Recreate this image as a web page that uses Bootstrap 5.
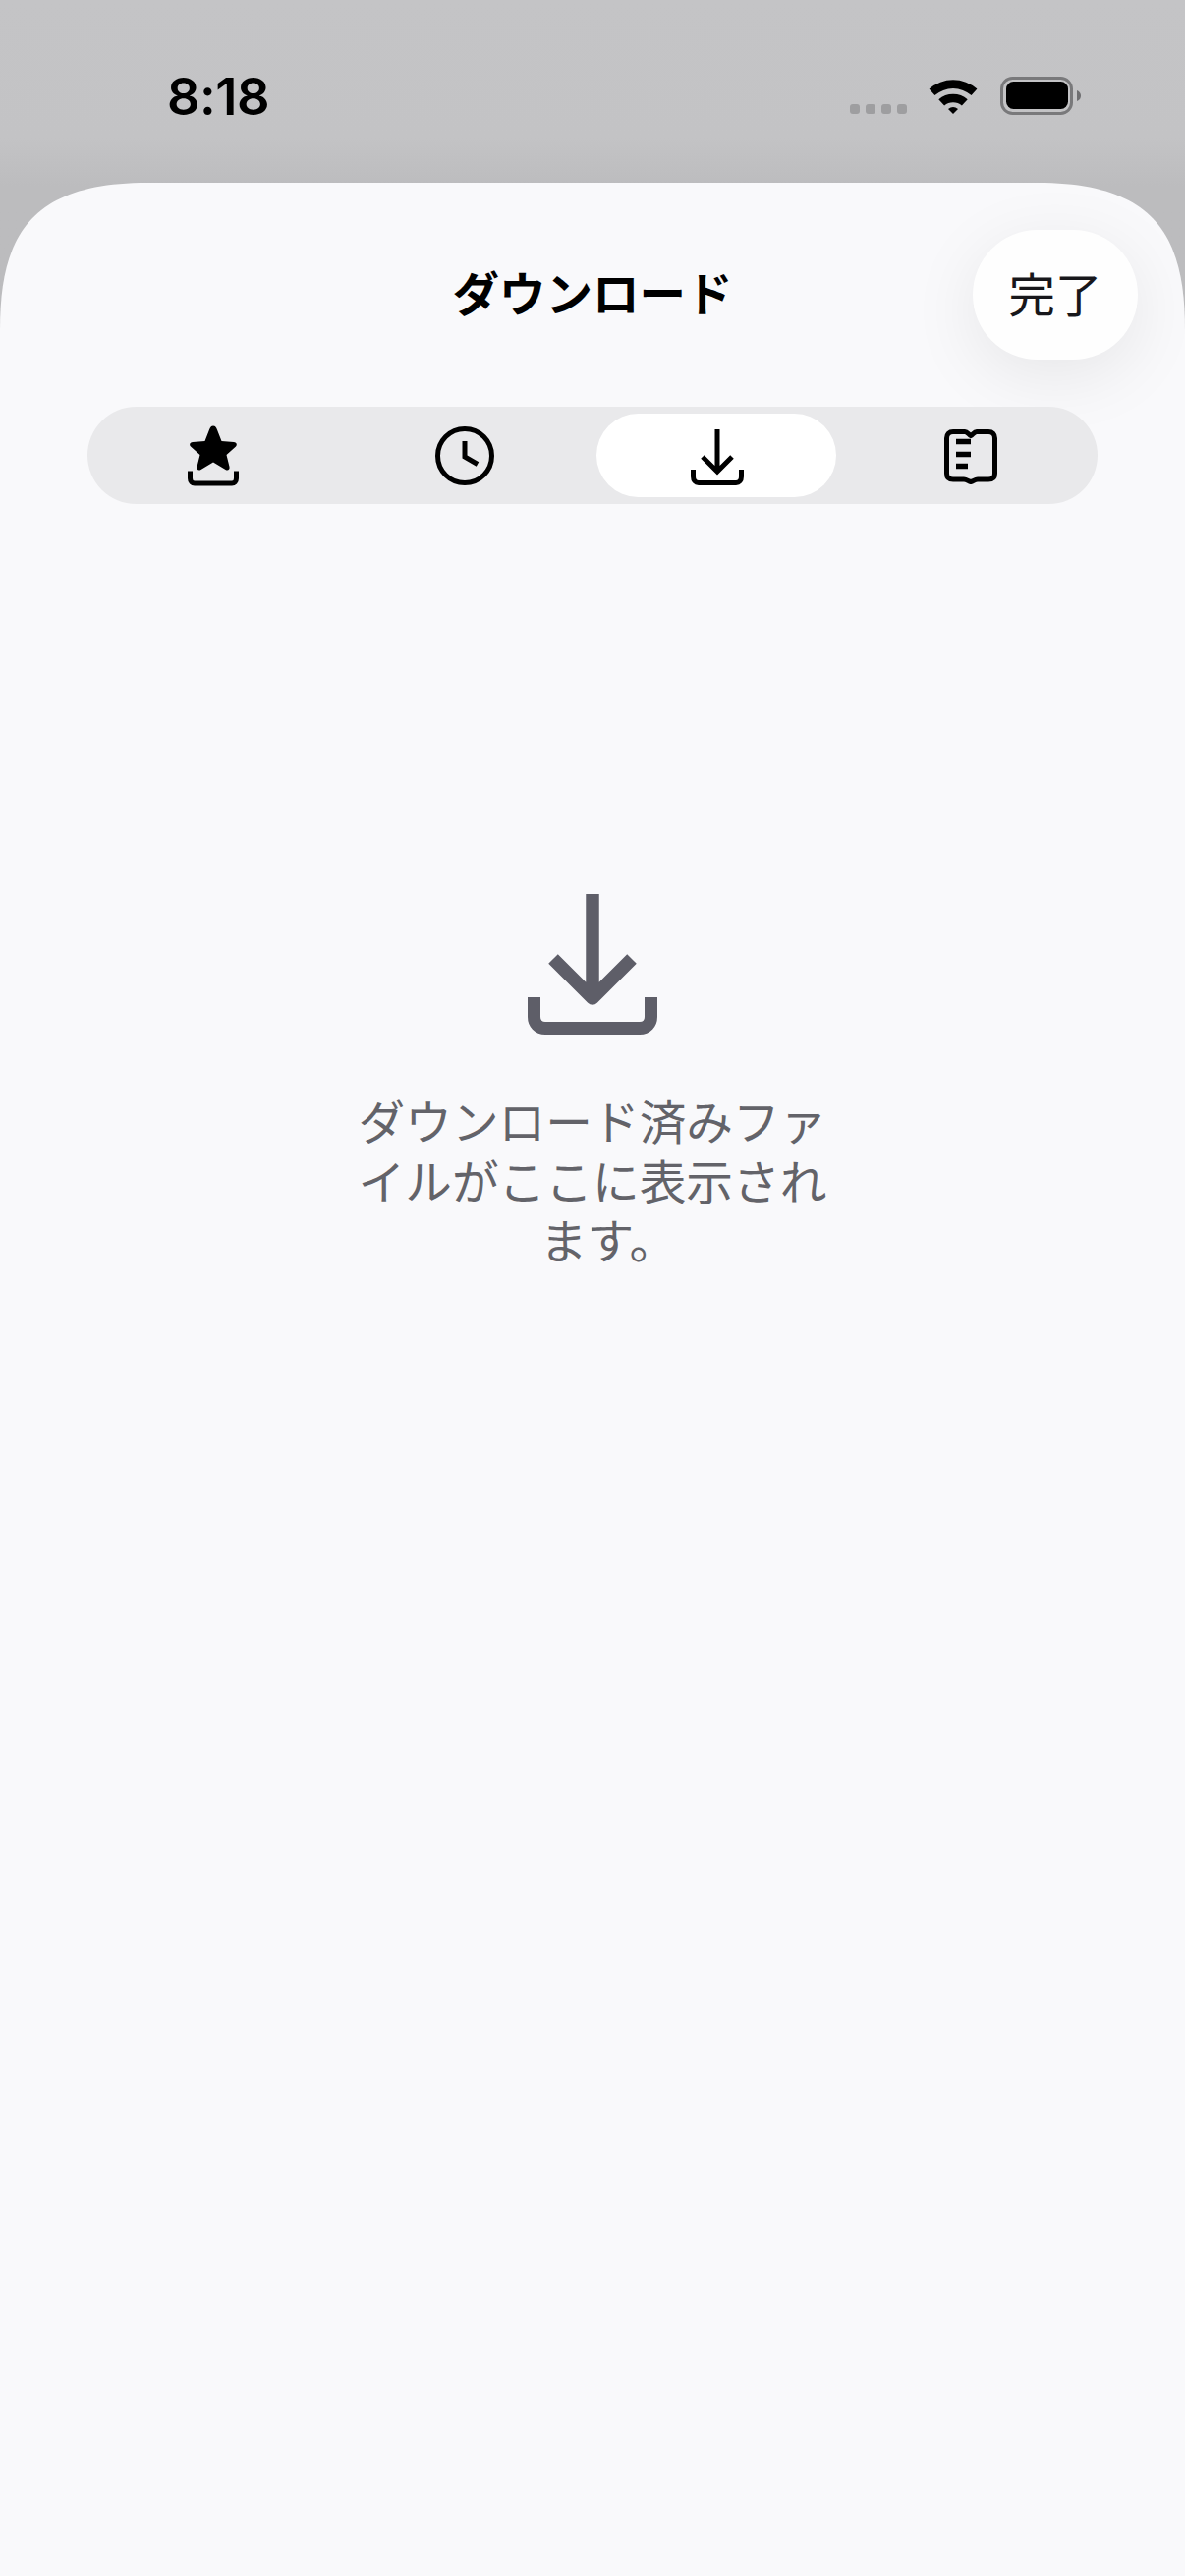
<!DOCTYPE html>
<html lang="ja">
<head>
<meta charset="utf-8">
<title>ダウンロード</title>
<link href="https://cdn.jsdelivr.net/npm/bootstrap@5.3.0/dist/css/bootstrap.min.css" rel="stylesheet">
<style>
html,body{height:100%}
body{background:linear-gradient(#c4c4c6,#c3c3c5 140px,#bcbcbe 190px,#bbbbbd);font-family:"Noto Sans CJK JP","Noto Sans",sans-serif;color:#000;width:1206px;height:2622px;overflow:hidden}
.phone-frame{height:2622px}
.status-strip{height:186px;padding:79px 106px 0 170px;align-items:flex-start}
.clock-text{font-family:Inter,"Noto Sans",sans-serif;font-weight:600;font-size:52.5px;line-height:38px;letter-spacing:-.5px}
.signal-dots{gap:6px;margin-top:27px;margin-right:22px}
.signal-dots i{display:block;width:10px;height:10px;border-radius:3px;background:#9e9ea0}
.wifi-ico{margin-right:23px}
.sheet-panel{background:#f9f9fb;clip-path:path("M0 150C0 55 30 0 150 0H1056C1176 0 1206 55 1206 150V2436H0Z");flex:1 1 auto;padding-top:48px}
.sheet-head{display:grid;grid-template-columns:1fr auto 1fr;align-items:center;height:132px}
.sheet-title{grid-column:2;font-size:47.5px;font-weight:600;line-height:60px;margin:0;padding-bottom:6px}
.done-btn{grid-column:3;justify-self:end;margin-right:48px;width:168px;height:132px;border-radius:66px;background:#fefefe;border:0;padding:0 0 5px 0;font-size:47.5px;line-height:60px;color:#17171b;box-shadow:0 16px 70px rgba(0,0,0,.08)}
.segment-bar{margin:48px 89px 0;height:99px;background:#e9e9eb;border-radius:50px}
.segment-cell{flex:0 0 256px;height:99px;padding:7px 6px;border:0;background:transparent}
.segment-cell>span{height:85px;border-radius:43px}
.segment-cell.is-on>span{background:#fff}
.book-shift{margin-left:6px;margin-top:3px}
.empty-ico{margin-top:397px}
.empty-copy{margin:57px 0 0;font-size:47.7px;line-height:60.5px;color:#636369;text-align:center}
.hang-mark{margin-right:-32px}
</style>
</head>
<body>
<div class="phone-frame d-flex flex-column">
  <div class="status-strip d-flex justify-content-between">
    <div class="clock-text">8:18</div>
    <div class="d-flex align-items-start">
      <div class="signal-dots d-flex"><i></i><i></i><i></i><i></i></div>
      <svg class="wifi-ico" width="50" height="37" viewBox="0 0 50 37"><path d="M0.6 11.500A37 37 0 0 1 49.400 11.500L43.600 18A28.500 28.500 0 0 0 6.400 18Z" fill="#000"/><path d="M10.300 22.300A22.500 22.500 0 0 1 39.700 22.300L33.900 28.500A14 14 0 0 0 16.100 28.500Z" fill="#000"/><path d="M20 32A8 8 0 0 1 30 32L25 37Z" fill="#000"/></svg>
      <svg width="82" height="39" viewBox="0 0 82 39" style="margin-top:-1px"><rect x="1.500" y="1.500" width="71" height="36" rx="11" fill="none" stroke="#79797b" stroke-width="3"/><rect x="6" y="5" width="63" height="28" rx="7.500" fill="#000"/><path d="M78 14C81 15 82 17.500 82 19.500C82 21.500 81 24 78 25Z" fill="#6f6f71"/></svg>
    </div>
  </div>
  <main class="sheet-panel d-flex flex-column">
    <header class="sheet-head">
      <h1 class="sheet-title">ダウンロード</h1>
      <button class="done-btn" type="button">完了</button>
    </header>
    <div class="segment-bar d-flex">
      <button class="segment-cell" type="button" aria-label="お気に入り"><span class="d-flex align-items-center justify-content-center">
        <svg width="56" height="64" viewBox="0 0 56 64"><path transform="translate(0 1)" d="M28 0.500C30 0.500 31 2 32 4.500L36.500 16L49 17C51.500 17.200 52.800 19.500 51 21.500L41.500 30L44.500 42C45.200 45 42.800 46.500 40.500 45L28 37.500L15.500 45C13.200 46.500 10.800 45 11.500 42L14.500 30L5 21.500C3.200 19.500 4.500 17.200 7 17L19.500 16L24 4.500C25 2 26 0.500 28 0.500Z" fill="#000"/><path d="M4.500 47.500V55C4.500 58.500 6.500 60 9 60H47C49.500 60 51.500 58.500 51.500 55V47.500" fill="none" stroke="#000" stroke-width="5"/></svg>
      </span></button>
      <button class="segment-cell" type="button" aria-label="履歴"><span class="d-flex align-items-center justify-content-center">
        <svg width="60" height="60" viewBox="0 0 60 60"><circle cx="30" cy="30" r="27.500" fill="none" stroke="#000" stroke-width="5"/><path d="M30 15V31L43 38.500" fill="none" stroke="#000" stroke-width="5"/></svg>
      </span></button>
      <button class="segment-cell is-on" type="button" aria-label="ダウンロード"><span class="d-flex align-items-center justify-content-center">
        <svg width="56" height="61" viewBox="0 0 56 61"><path d="M29 4V48M14 32L29 47L44 32" fill="none" stroke="#000" stroke-width="5"/><path d="M4.500 45V52C4.500 56 6.500 58.500 10 58.500H48C51.500 58.500 53.500 56 53.500 52V45" fill="none" stroke="#000" stroke-width="5"/></svg>
      </span></button>
      <button class="segment-cell" type="button" aria-label="リーディングリスト"><span class="d-flex align-items-center justify-content-center">
        <svg class="book-shift" width="54" height="56" viewBox="0 0 54 56"><path d="M9 2.500H21C23.500 2.500 25 5.500 27 6.500C29 5.500 30.500 2.500 33 2.500H45C49 2.500 51.500 5 51.500 9V45C51.500 49 49 51 45 51H34C31 51 29.500 53 27 53.500C24.500 53 23 51 20 51H9C5 51 2.500 49 2.500 45V9C2.500 5 5 2.500 9 2.500Z" fill="none" stroke="#000" stroke-width="5"/><path d="M12 12.500H27M12 25.500H27M12 37.500H24" fill="none" stroke="#000" stroke-width="5.500"/></svg>
      </span></button>
    </div>
    <div class="empty-ico d-flex justify-content-center">
      <svg width="132" height="143" viewBox="0 0 132 143"><path d="M66 0V106M26 66L66 106L106 66" fill="none" stroke="#5e5e68" stroke-width="13.500" stroke-linejoin="round"/><path d="M6.500 105V125C6.500 131.500 11 136.500 18 136.500H114C121 136.500 125.500 131.500 125.500 125V105" fill="none" stroke="#5e5e68" stroke-width="13"/></svg>
    </div>
    <p class="empty-copy">ダウンロード済みファ<br>イルがここに表示され<br>ます<span class="hang-mark">。</span></p>
  </main>
</div>
</body>
</html>
